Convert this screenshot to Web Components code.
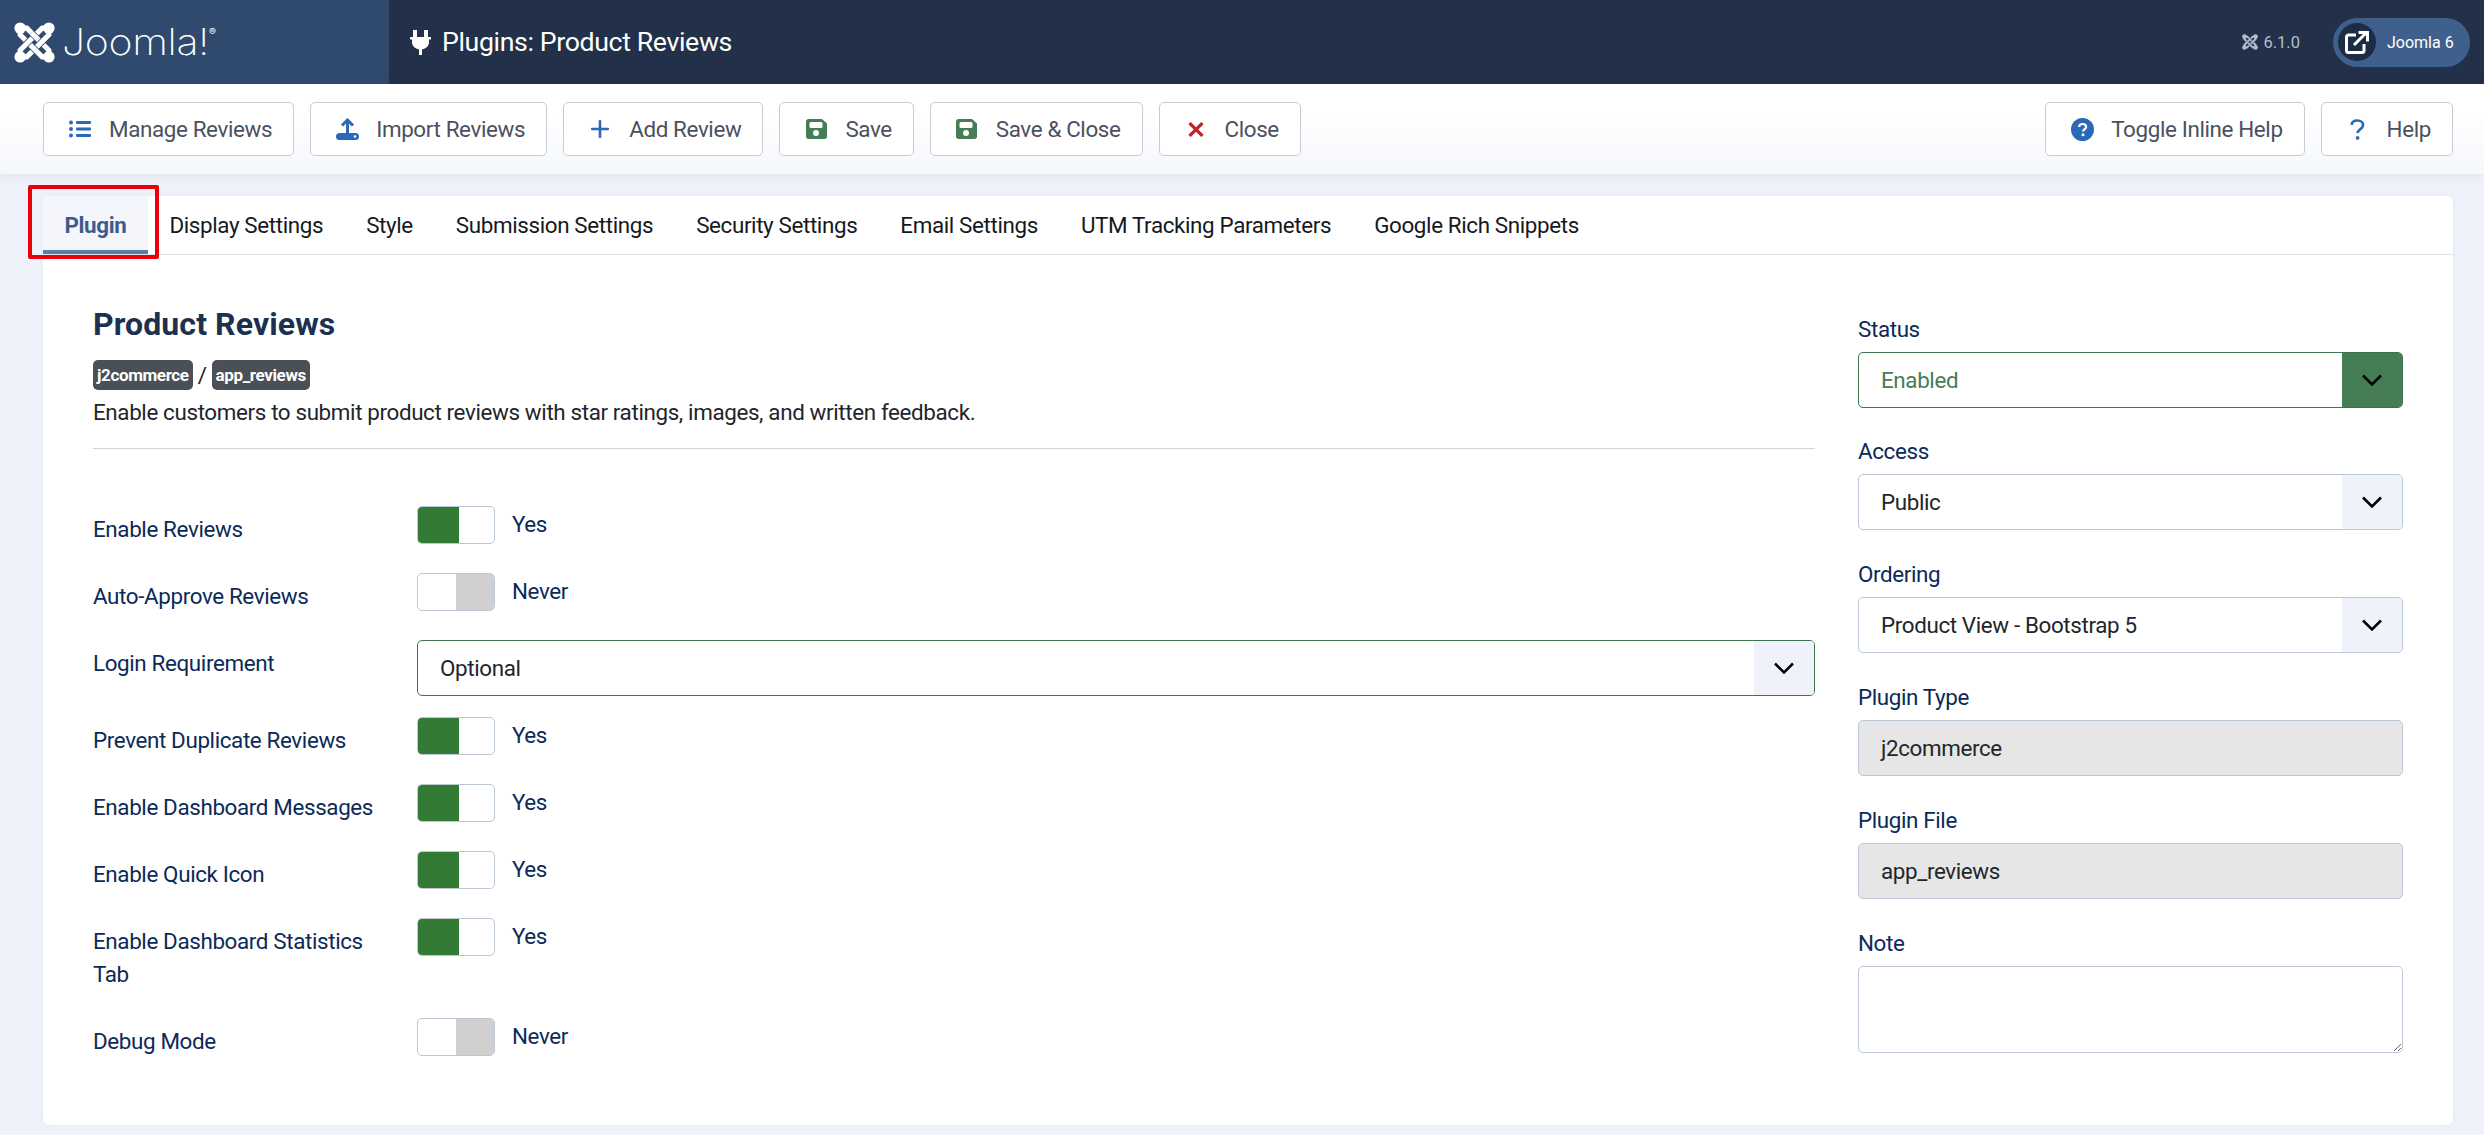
<!DOCTYPE html>
<html lang="en">
<head>
<meta charset="utf-8">
<title>Plugins: Product Reviews</title>
<style>
  html, body { margin: 0; height: 100%; }
  body { font-family: Roboto, "Liberation Sans", sans-serif; font-size: 22.4px; letter-spacing: -0.37px; background: #eff2fa; overflow: hidden; }
</style>
</head>
<body>
<admin-page>
  <admin-header slot="header" page-title="Plugins: Product Reviews" version="6.1.0" site="Joomla 6"></admin-header>
  <admin-toolbar slot="toolbar">
    <tool-button icon="list">Manage Reviews</tool-button>
    <tool-button icon="upload">Import Reviews</tool-button>
    <tool-button icon="plus">Add Review</tool-button>
    <tool-button icon="save">Save</tool-button>
    <tool-button icon="save">Save &amp; Close</tool-button>
    <tool-button icon="close">Close</tool-button>
    <tool-button slot="end" icon="help-circle">Toggle Inline Help</tool-button>
    <tool-button slot="end" icon="help">Help</tool-button>
  </admin-toolbar>
  <plugin-card>
    <tab-item slot="tabs" active highlight>Plugin</tab-item>
    <tab-item slot="tabs">Display Settings</tab-item>
    <tab-item slot="tabs">Style</tab-item>
    <tab-item slot="tabs">Submission Settings</tab-item>
    <tab-item slot="tabs">Security Settings</tab-item>
    <tab-item slot="tabs">Email Settings</tab-item>
    <tab-item slot="tabs">UTM Tracking Parameters</tab-item>
    <tab-item slot="tabs">Google Rich Snippets</tab-item>

    <plugin-intro slot="main" heading="Product Reviews" folder="j2commerce" element="app_reviews">
      Enable customers to submit product reviews with star ratings, images, and written feedback.
    </plugin-intro>
    <form-row slot="main" label="Enable Reviews"><switch-field on>Yes</switch-field></form-row>
    <form-row slot="main" label="Auto-Approve Reviews"><switch-field>Never</switch-field></form-row>
    <form-row slot="main" label="Login Requirement"><select-field active>Optional</select-field></form-row>
    <form-row slot="main" label="Prevent Duplicate Reviews"><switch-field on>Yes</switch-field></form-row>
    <form-row slot="main" label="Enable Dashboard Messages"><switch-field on>Yes</switch-field></form-row>
    <form-row slot="main" label="Enable Quick Icon"><switch-field on>Yes</switch-field></form-row>
    <form-row slot="main" label="Enable Dashboard Statistics Tab"><switch-field on>Yes</switch-field></form-row>
    <form-row slot="main" label="Debug Mode"><switch-field>Never</switch-field></form-row>

    <side-field slot="side" label="Status"><select-field status>Enabled</select-field></side-field>
    <side-field slot="side" label="Access"><select-field>Public</select-field></side-field>
    <side-field slot="side" label="Ordering"><select-field>Product View - Bootstrap 5</select-field></side-field>
    <side-field slot="side" label="Plugin Type"><readonly-field>j2commerce</readonly-field></side-field>
    <side-field slot="side" label="Plugin File"><readonly-field>app_reviews</readonly-field></side-field>
    <side-field slot="side" label="Note"><note-field></note-field></side-field>
  </plugin-card>
</admin-page>

<script>
class ShadowElement extends HTMLElement {
  constructor() {
    super();
    this.attachShadow({ mode: 'open' });
  }

  connectedCallback() {
    this.shadowRoot.innerHTML = `<style>${this.styles()}</style>${this.template()}`;
  }
}

const ICONS = {
  list: `<svg width="22" height="18" viewBox="0 0 22 18" fill="#2a69b8"><circle cx="2" cy="2.5" r="2"/><circle cx="2" cy="9" r="2"/><circle cx="2" cy="15.5" r="2"/><rect x="7" y="1" width="15" height="3" rx="1"/><rect x="7" y="7.5" width="15" height="3" rx="1"/><rect x="7" y="14" width="15" height="3" rx="1"/></svg>`,
  upload: `<svg width="23" height="22" viewBox="0 0 23 22"><path d="M11.500 15V2M6 7.500l5.500-5.500 5.500 5.500" fill="none" stroke="#2a69b8" stroke-width="3"/><rect y="15" width="23" height="7" rx="3.500" fill="#2a69b8"/><circle cx="19" cy="18.500" r="1.300" fill="#fff"/></svg>`,
  plus: `<svg width="20" height="20" viewBox="0 0 20 20" fill="#2a69b8"><rect x="8.700" y="1" width="2.600" height="18" rx="1"/><rect x="1" y="8.700" width="18" height="2.600" rx="1"/></svg>`,
  save: `<svg width="21" height="20" viewBox="0 0 21 20"><path fill="#457d54" d="M2.500 0H16l5 4.500v13c0 1.400-1.100 2.500-2.500 2.500h-16C1.100 20 0 18.900 0 17.500v-15C0 1.100 1.100 0 2.500 0z"/><rect x="3.500" y="3" width="13" height="6" rx="1.500" fill="#fff"/><circle cx="10" cy="14" r="3" fill="#fff"/></svg>`,
  close: `<svg width="16" height="15" viewBox="0 0 16 15" fill="none" stroke="#c0272d" stroke-width="3.200"><path d="M1.500 1l13 13M14.500 1l-13 13"/></svg>`,
  'help-circle': `<svg width="23" height="23" viewBox="0 0 23 23"><circle cx="11.500" cy="11.500" r="11.500" fill="#2a69b8"/><path d="M8 9c.2-2 1.700-3 3.600-3 2.100 0 3.500 1.200 3.500 2.900 0 2.500-3 2.600-3 4.500" fill="none" stroke="#fff" stroke-width="2.200"/><circle cx="12" cy="16.800" r="1.500" fill="#fff"/></svg>`,
  help: `<svg width="15" height="21" viewBox="0 0 15 21"><path d="M1.600 5.800C1.900 2.900 4.200 1.500 7.300 1.500c3.300 0 5.800 1.800 5.800 4.600 0 4.100-5.500 4.200-5.500 8" fill="none" stroke="#2a69b8" stroke-width="2.700"/><circle cx="7.600" cy="18.900" r="1.900" fill="#2a69b8"/></svg>`
};

class AdminPage extends ShadowElement {
  styles() {
    return `
      :host { display: flex; flex-direction: column; height: 100vh; }
      main { flex: 1; display: flex; min-height: 0; padding: 22px 31px 10px 43px; }
    `;
  }

  template() {
    return `<slot name="header"></slot><slot name="toolbar"></slot><main><slot></slot></main>`;
  }
}

class JoomlaMark extends ShadowElement {
  styles() {
    return `
      :host { display: inline-flex; }
      svg { width: var(--mark-size, 41px); height: var(--mark-size, 41px); }
      .under { stroke: var(--mark-gap, #2f4a6e); stroke-width: 6.500; fill: none; }
      .over { stroke: var(--mark-color, #fff); stroke-width: 5; fill: none; }
      circle { fill: var(--mark-color, #fff); }
    `;
  }

  template() {
    // woven bands, last entry puts one band back on top to close the weave
    const bands = [
      'M6 6L12.500 6L34 27.500L34 34',
      'M34 6L34 12.500L12.500 34L6 34',
      'M6 6L6 12.500L27.500 34L34 34',
      'M34 6L27.500 6L6 27.500L6 34',
      'M17 10.500L23 16.500'
    ];
    const strokes = bands.map(d => `<path class="under" d="${d}"/><path class="over" d="${d}"/>`).join('');
    return `
      <svg viewBox="0 0 40 40">
        ${strokes}
        <circle cx="6" cy="6" r="5.600"/><circle cx="34" cy="6" r="5.600"/>
        <circle cx="6" cy="34" r="5.600"/><circle cx="34" cy="34" r="5.600"/>
      </svg>
    `;
  }
}

class AdminHeader extends ShadowElement {
  styles() {
    return `
      :host { display: flex; height: 84px; background: #223149; color: #fff; align-items: stretch; flex: none; }
      .brand { width: 389px; background: #2f4a6e; display: flex; align-items: center; padding-left: 14px; box-sizing: border-box; }
      .word { display: inline-block; font-family: Inter, Roboto, sans-serif; font-weight: 200; font-size: 36px; line-height: 1; margin-left: 7px; letter-spacing: -0.300px; transform: scaleX(1.140); transform-origin: left center; }
      .word sup { font-size: 9px; vertical-align: 20px; line-height: 0; font-weight: 400; letter-spacing: 0; }
      .title { display: flex; align-items: center; padding-left: 21px; gap: 11px; font-size: 26.700px; flex: 1; }
      .meta { display: flex; align-items: center; padding-right: 14px; letter-spacing: 0; }
      .version { display: flex; align-items: center; gap: 5px; font-size: 16.500px; color: #b4bdcc; margin-right: 33px; --mark-size: 16px; --mark-color: #b4bdcc; --mark-gap: #223149; }
      .pill { display: flex; align-items: center; height: 49px; width: 137px; box-sizing: border-box; border-radius: 25px; background: #3f5f8c; padding-left: 5px; font-size: 16px; }
      .disc { width: 38px; height: 38px; border-radius: 50%; background: #1c2c44; display: flex; align-items: center; justify-content: center; margin-right: 11px; }
    `;
  }

  template() {
    return `
      <div class="brand"><joomla-mark></joomla-mark><span class="word">Joomla!<sup>®</sup></span></div>
      <div class="title">
        <svg width="21" height="25" viewBox="0 0 21 25" fill="#fff"><rect x="3" width="4" height="7.500"/><rect x="14" width="4" height="7.500"/><path d="M1 7h19a1 1 0 0 1 0 2.600h-1v2.400c0 4-3 6.600-7 7.500V25H9v-5.500c-4-.9-7-3.500-7-7.500V9.600H1A1 1 0 0 1 1 7z"/></svg>
        <span>${this.getAttribute('page-title')}</span>
      </div>
      <div class="meta">
        <div class="version"><joomla-mark></joomla-mark><span>${this.getAttribute('version')}</span></div>
        <div class="pill">
          <span class="disc"><svg width="24" height="23" viewBox="0 0 24 23" fill="none" stroke="#fff" stroke-width="3"><path d="M11 4H3.500A2 2 0 0 0 1.500 6v13.500a2 2 0 0 0 2 2H17a2 2 0 0 0 2-2V13"/><path d="M9 14L21 2M13.500 1.500H22.500V10.500" stroke-width="3"/></svg></span>
          <span>${this.getAttribute('site')}</span>
        </div>
      </div>
    `;
  }
}

class AdminToolbar extends ShadowElement {
  styles() {
    return `
      :host { display: flex; justify-content: space-between; height: 90px; box-sizing: border-box; padding: 18px 31px 0 43px; flex: none; background: linear-gradient(#fff 30%, #f5f7fb); box-shadow: 0 2px 12px rgba(40, 60, 100, .08); position: relative; }
      div { display: flex; gap: 16px; align-items: flex-start; }
    `;
  }

  template() {
    return `<div><slot></slot></div><div><slot name="end"></slot></div>`;
  }
}

class ToolButton extends ShadowElement {
  styles() {
    return `
      :host { display: inline-flex; align-items: center; height: 54px; box-sizing: border-box; padding: 0 21px 0 22px; background: #fff; border: 1px solid #c6cbd6; border-radius: 5px; color: #4b5160; }
      .icon { width: 28px; display: flex; justify-content: center; margin-right: 15px; }
    `;
  }

  template() {
    return `<span class="icon">${ICONS[this.getAttribute('icon')]}</span><slot></slot>`;
  }
}

class PluginCard extends ShadowElement {
  styles() {
    return `
      :host { display: flex; flex-direction: column; flex: 1; background: #fff; border-radius: 6px; box-shadow: 0 0 6px rgba(60, 80, 130, .06); }
      nav { display: flex; height: 59px; box-sizing: border-box; border-bottom: 1px solid #dfe5ee; }
      .body { display: grid; grid-template-columns: 1fr 545px; column-gap: 43px; padding: 51px 50px 0; }
      .side { padding-top: 6.550px; }
    `;
  }

  template() {
    return `
      <nav><slot name="tabs"></slot></nav>
      <div class="body">
        <div><slot name="main"></slot></div>
        <div class="side"><slot name="side"></slot></div>
      </div>
    `;
  }
}

class TabItem extends ShadowElement {
  styles() {
    return `
      :host { display: flex; align-items: center; position: relative; padding: 0 21.500px; color: #15191e; height: 58px; box-sizing: border-box; }
      :host([active]) { color: #3d5c8c; font-weight: 700; background: #f4f6fb; border-bottom: 4px solid #5d7ca6; padding-top: 4px; }
      .mark { position: absolute; left: -15px; right: -11px; top: -11px; bottom: -9px; border: 4.500px solid #e8000b; border-radius: 2px; pointer-events: none; }
    `;
  }

  template() {
    const mark = this.hasAttribute('highlight') ? '<span class="mark"></span>' : '';
    return `<slot></slot>${mark}`;
  }
}

class PluginIntro extends ShadowElement {
  styles() {
    return `
      :host { display: block; color: #1f252c; }
      h2 { margin: 0; font-size: 32px; letter-spacing: 0.100px; line-height: 37px; font-weight: 700; color: #1c3050; }
      .path { display: flex; align-items: center; gap: 5px; margin-top: 17px; height: 30px; color: #1f252c; }
      .badge { background: #4a5056; color: #fff; font-size: 17px; font-weight: 700; line-height: 30px; height: 30px; padding: 0 4px; border-radius: 5px; }
      p { margin: 6px 0 0; line-height: 33px; }
      hr { border: 0; border-top: 1px solid #cfd3da; margin: 19px 0 57px; }
    `;
  }

  template() {
    return `
      <h2>${this.getAttribute('heading')}</h2>
      <div class="path"><span class="badge">${this.getAttribute('folder')}</span><span>/</span><span class="badge">${this.getAttribute('element')}</span></div>
      <p><slot></slot></p>
      <hr>
    `;
  }
}

class FormRow extends ShadowElement {
  styles() {
    return `
      :host { display: grid; grid-template-columns: 324px 1fr; margin-bottom: 21px; color: #0c2a58; }
      label { display: block; padding: 6.500px 20px 6.500px 0; line-height: 33px; max-width: 300px; }
    `;
  }

  template() {
    return `<label>${this.getAttribute('label')}</label><div><slot></slot></div>`;
  }
}

class SwitchField extends ShadowElement {
  styles() {
    return `
      :host { display: flex; align-items: center; height: 38px; gap: 17px; color: #0c2a58; }
      .track { display: flex; width: 78px; height: 38px; box-sizing: border-box; border: 1px solid #bcc7d6; border-radius: 5px; overflow: hidden; background: #fff; }
      .yes { width: 41px; background: #337a35; }
      .no { width: 38px; margin-left: auto; background: #d0d0d0; }
      span { margin-top: -2px; }
    `;
  }

  template() {
    const fill = this.hasAttribute('on') ? '<i class="yes"></i>' : '<i class="no"></i>';
    return `<div class="track">${fill}</div><span><slot></slot></span>`;
  }
}

class SelectField extends ShadowElement {
  styles() {
    return `
      :host { display: flex; align-items: center; height: 56px; box-sizing: border-box; border: 1px solid #bcc7d6; border-radius: 5px; padding-left: 22px; color: #22262a; overflow: hidden; background: #fff; }
      :host([active]) { border-color: #3f7350; }
      :host([status]) { border-color: #3f7350; color: #457d54; }
      .caret { margin-left: auto; width: 60px; height: 100%; background: #eff2fa; display: flex; align-items: center; justify-content: center; }
      :host([status]) .caret { background: #457d54; }
    `;
  }

  template() {
    return `
      <slot></slot>
      <span class="caret"><svg width="20" height="12" viewBox="0 0 20 12" fill="none" stroke="#000" stroke-width="2.500"><path d="M1 1.500l9 9 9-9"/></svg></span>
    `;
  }
}

class SideField extends ShadowElement {
  styles() {
    return `
      :host { display: block; margin-bottom: 27.900px; color: #0c2a58; }
      label { display: block; line-height: 33px; margin-bottom: 6px; }
    `;
  }

  template() {
    return `<label>${this.getAttribute('label')}</label><slot></slot>`;
  }
}

class ReadonlyField extends ShadowElement {
  styles() {
    return `
      :host { display: flex; align-items: center; height: 56px; box-sizing: border-box; border: 1px solid #bcc7d6; border-radius: 5px; padding-left: 22px; color: #22262a; background: #e6e6e6; }
    `;
  }

  template() {
    return `<slot></slot>`;
  }
}

class NoteField extends ShadowElement {
  styles() {
    return `
      :host { display: block; }
      textarea { display: block; width: 100%; height: 87px; box-sizing: border-box; border: 1px solid #bcc7d6; border-radius: 5px; resize: vertical; outline: 0; background: #fff; font: inherit; }
    `;
  }

  template() {
    return `<textarea aria-label="Note"></textarea>`;
  }
}

customElements.define('admin-page', AdminPage);
customElements.define('joomla-mark', JoomlaMark);
customElements.define('admin-header', AdminHeader);
customElements.define('admin-toolbar', AdminToolbar);
customElements.define('tool-button', ToolButton);
customElements.define('plugin-card', PluginCard);
customElements.define('tab-item', TabItem);
customElements.define('plugin-intro', PluginIntro);
customElements.define('form-row', FormRow);
customElements.define('switch-field', SwitchField);
customElements.define('select-field', SelectField);
customElements.define('side-field', SideField);
customElements.define('readonly-field', ReadonlyField);
customElements.define('note-field', NoteField);
</script>
</body>
</html>
